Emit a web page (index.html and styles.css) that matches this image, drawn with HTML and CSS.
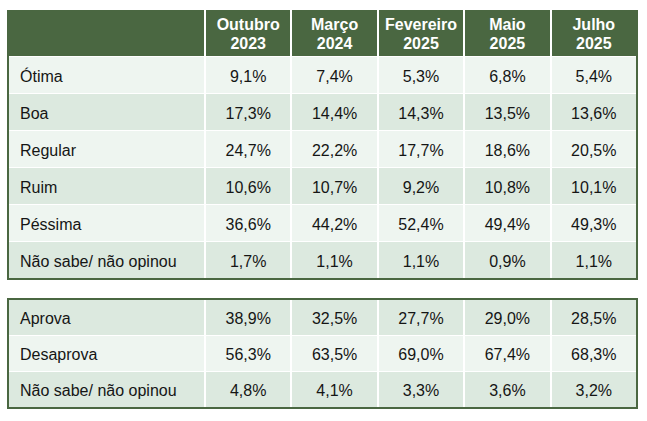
FILE: index.html
```html
<!DOCTYPE html>
<html lang="pt">
<head>
<meta charset="utf-8">
<title>Avaliação</title>
<link rel="stylesheet" href="styles.css">
</head>
<body>
<div class="tbl tbl-main">
  <div class="row head">
    <div class="cell"></div>
    <div class="cell">Outubro<br>2023</div>
    <div class="cell">Março<br>2024</div>
    <div class="cell">Fevereiro<br>2025</div>
    <div class="cell">Maio<br>2025</div>
    <div class="cell">Julho<br>2025</div>
  </div>
  <div class="row light">
    <div class="cell label">Ótima</div>
    <div class="cell">9,1%</div><div class="cell">7,4%</div><div class="cell">5,3%</div><div class="cell">6,8%</div><div class="cell">5,4%</div>
  </div>
  <div class="row dark">
    <div class="cell label">Boa</div>
    <div class="cell">17,3%</div><div class="cell">14,4%</div><div class="cell">14,3%</div><div class="cell">13,5%</div><div class="cell">13,6%</div>
  </div>
  <div class="row light">
    <div class="cell label">Regular</div>
    <div class="cell">24,7%</div><div class="cell">22,2%</div><div class="cell">17,7%</div><div class="cell">18,6%</div><div class="cell">20,5%</div>
  </div>
  <div class="row dark">
    <div class="cell label">Ruim</div>
    <div class="cell">10,6%</div><div class="cell">10,7%</div><div class="cell">9,2%</div><div class="cell">10,8%</div><div class="cell">10,1%</div>
  </div>
  <div class="row light">
    <div class="cell label">Péssima</div>
    <div class="cell">36,6%</div><div class="cell">44,2%</div><div class="cell">52,4%</div><div class="cell">49,4%</div><div class="cell">49,3%</div>
  </div>
  <div class="row dark">
    <div class="cell label">Não sabe/ não opinou</div>
    <div class="cell">1,7%</div><div class="cell">1,1%</div><div class="cell">1,1%</div><div class="cell">0,9%</div><div class="cell">1,1%</div>
  </div>
</div>

<div class="tbl tbl-second">
  <div class="row dark">
    <div class="cell label">Aprova</div>
    <div class="cell">38,9%</div><div class="cell">32,5%</div><div class="cell">27,7%</div><div class="cell">29,0%</div><div class="cell">28,5%</div>
  </div>
  <div class="row light">
    <div class="cell label">Desaprova</div>
    <div class="cell">56,3%</div><div class="cell">63,5%</div><div class="cell">69,0%</div><div class="cell">67,4%</div><div class="cell">68,3%</div>
  </div>
  <div class="row dark">
    <div class="cell label">Não sabe/ não opinou</div>
    <div class="cell">4,8%</div><div class="cell">4,1%</div><div class="cell">3,3%</div><div class="cell">3,6%</div><div class="cell">3,2%</div>
  </div>
</div>
</body>
</html>
```

FILE: styles.css
```css
html, body {
  margin: 0;
  background: #ffffff;
}

body {
  padding: 10px 0 0 7px;
  font-family: "Liberation Sans", Arial, sans-serif;
  color: #151515;
}

.tbl {
  width: 631px;
  box-sizing: border-box;
  display: flex;
  flex-direction: column;
  gap: 1px;
  background: #ffffff;
  border: 2px solid #4a6741;
}

.tbl-main {
  border-top: 0;
}

.tbl-second {
  margin-top: 18px;
}

.row {
  display: grid;
  grid-template-columns: 195px repeat(5, 1fr);
  column-gap: 2px;
  height: 36px;
}

.tbl-second .row {
  height: 35px;
}

.head {
  height: 46px;
}

.cell {
  display: flex;
  align-items: center;
  justify-content: center;
  text-align: center;
  font-size: 16px;
  box-sizing: border-box;
  padding-top: 3px;
}

.cell.label {
  justify-content: flex-start;
  padding-left: 11px;
}

.head .cell {
  background: #4a6741;
  color: #ffffff;
  font-weight: bold;
  line-height: 19px;
  padding-top: 1px;
}

.light .cell {
  background: #eef5f0;
}

.dark .cell {
  background: #dce9df;
}
```
